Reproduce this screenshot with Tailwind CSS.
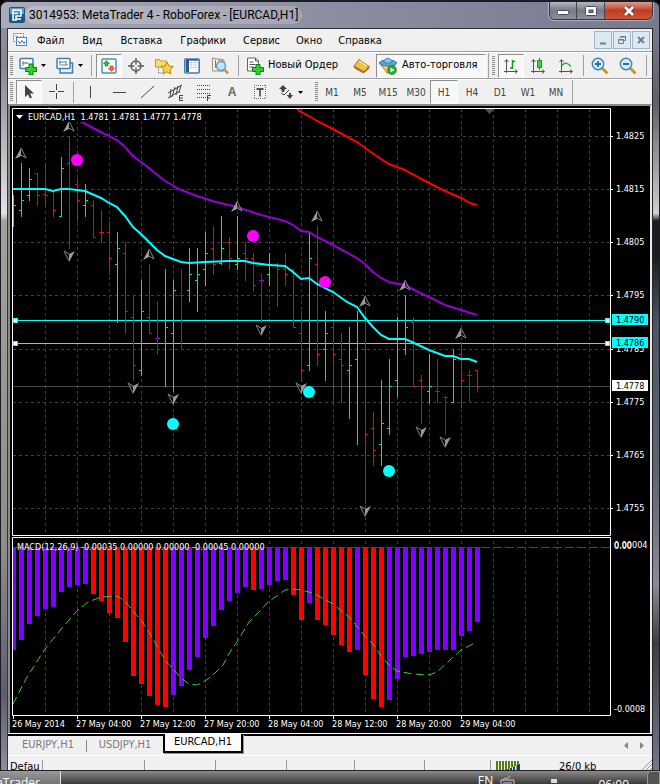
<!DOCTYPE html>
<html lang="ru">
<head>
    <meta charset="UTF-8">
    <meta name="viewport" content="width=device-width, initial-scale=1.0">
    <title>MetaTrader 4 - RoboForex</title>
    <script src="https://cdn.jsdelivr.net/npm/@tailwindcss/browser@4"></script>
</head>
<body class="bg-black font-['DejaVu_Sans_Condensed','DejaVu_Sans',sans-serif] text-[11px] text-black overflow-hidden">
<div class="flex flex-col min-h-screen">

    <!-- window frame -->
    <div class="rounded-t-lg border-t-2 border-x border-[#1c1c26] bg-[#777a8f] overflow-hidden">

        <!-- title bar -->
        <header class="h-[26px] flex items-center ps-2 pe-1.5 bg-gradient-to-r from-[#a9abb9] via-[#8b8da0] to-[#777a8f]">
            <svg class="w-4 h-4 shrink-0" viewBox="0 0 16 16">
                <rect width="16" height="16" rx="2" fill="#1d5784"/>
                <path d="M1 1h14v6H1z" fill="#5f9cc4"/>
                <path d="M4 3h8v6H7v4H4zM4 6.5h5M7 12h5" fill="none" stroke="#fff" stroke-width="1.6"/>
            </svg>
            <h1 class="px-1 text-[12px] font-['Roboto',sans-serif] whitespace-nowrap rounded-full bg-white/20">3014953: MetaTrader 4 - RoboForex - [EURCAD,H1]</h1>
            <div class="ms-auto self-start flex h-[18px] border border-t-0 border-[#33343f] rounded-b-md overflow-hidden shadow-[0_0_1px_1px_#ffffff66]">
                <button class="w-[27px] flex items-center justify-center border-e border-[#44454f] bg-gradient-to-b from-[#b5b6c1] via-[#777988] to-[#8f919e]" aria-label="Свернуть">
                    <svg class="w-3 h-3" viewBox="0 0 12 12"><rect x=".5" y="5.500" width="11" height="4" rx="1" fill="#fff" stroke="#4a4b58"/></svg>
                </button>
                <button class="w-[28px] flex items-center justify-center border-e border-[#44454f] bg-gradient-to-b from-[#b5b6c1] via-[#777988] to-[#8f919e]" aria-label="Развернуть">
                    <svg class="w-3 h-3" viewBox="0 0 12 12"><rect x=".5" y="1.500" width="11" height="9" rx="1" fill="#fff" stroke="#4a4b58"/><rect x="4" y="5" width="4" height="2.500" fill="#777988" stroke="#4a4b58"/></svg>
                </button>
                <button class="w-[47px] flex items-center justify-center bg-gradient-to-b from-[#dc9a8c] via-[#c23a20] to-[#c9553a]" aria-label="Закрыть">
                    <svg class="w-3 h-3" viewBox="0 0 12 12"><path d="M2 2l8 8M10 2l-8 8" stroke="#4a3038" stroke-width="4.500"/><path d="M2 2l8 8M10 2l-8 8" stroke="#fff" stroke-width="2.800"/></svg>
                </button>
            </div>
        </header>

        <div class="flex">
        <div class="w-[7px] shrink-0 border-e border-[#33333b] bg-[linear-gradient(#8d90a3,#8a8890_5%,#e4e2e2_25%,#a3a09e_26%,#8f8c8a_70%,#5c5e70_90%,#8d8f9c)]"></div>
        <div class="flex-1 min-w-0 border-t border-[#303038] bg-[#f0f0f0]">

            <!-- main menu -->
            <nav class="flex items-center h-[23px] ps-1 border-b border-[#a0a0a0]">
                <svg class="w-4 h-4 shrink-0" viewBox="0 0 16 16">
                    <rect x="1.500" y="1.500" width="10" height="8" fill="#fff" stroke="#4d82c8" stroke-dasharray="2 1"/>
                    <path d="M3 4h2l2 2 2-2" fill="none" stroke="#4d82c8"/>
                    <rect x="4.500" y="5.500" width="10" height="8" fill="#fff" stroke="#4d82c8"/>
                    <path d="M6 9l2 2.500 2-3 2 3 1-2" fill="none" stroke="#2f66b4"/>
                </svg>
                <div class="flex pt-0.5">
                    <button class="px-[9px]">Файл</button>
                    <button class="px-[9px]">Вид</button>
                    <button class="px-[9px]">Вставка</button>
                    <button class="px-[9px]">Графики</button>
                    <button class="px-[8px]">Сервис</button>
                    <button class="px-[8px]">Окно</button>
                    <button class="px-[8px]">Справка</button>
                </div>
                <div class="ms-auto flex gap-px pe-0.5">
                    <button class="w-[18px] h-[18px] border border-[#9fb4c8] bg-[#dce9f5]" aria-label="Свернуть график"><svg viewBox="0 0 16 16"><path d="M5 11.500h6" stroke="#6d7f8f" stroke-width="2"/></svg></button>
                    <button class="w-[18px] h-[18px] border border-[#9fb4c8] bg-[#dce9f5]" aria-label="Восстановить график"><svg viewBox="0 0 16 16"><path d="M6.500 6V4.500h5v4H10M6 5h6M4.500 7.500h5v4h-5zM4 8h6" fill="none" stroke="#6d7f8f"/></svg></button>
                    <button class="w-[18px] h-[18px] border border-[#9fb4c8] bg-[#dce9f5]" aria-label="Закрыть график"><svg viewBox="0 0 16 16"><path d="M5 5l6 6M11 5l-6 6" stroke="#6d7f8f" stroke-width="2"/></svg></button>
                </div>
            </nav>

            <!-- standard toolbar -->
            <div class="flex items-center h-[27px] border-t border-b border-t-white border-b-[#a0a0a0] overflow-hidden *:shrink-0">
                <span class="w-2 h-5 flex ps-0.5"><i class="w-[3px] bg-[repeating-linear-gradient(#8a8a8a_0_1px,transparent_1px_2px)]"></i></span>
                <button class="w-[34px] flex items-center gap-1 ps-[3px]" aria-label="Новый график">
                    <svg class="w-[18px] h-[18px]" viewBox="0 0 18 18"><rect x="1" y="1.500" width="13" height="10" rx="1" fill="#fff" stroke="#3f7fb5" stroke-width="1.500"/><path d="M4 4v5M3 6h7M7 5v2" stroke="#6b7f90"/><path d="M10 7h4v3.500h3.500v4H14V18h-4v-3.500H6.500v-4H10z" fill="#2fd12f" stroke="#0b7d14"/></svg>
                    <svg class="w-[5px] h-[3px]" viewBox="0 0 5 3"><path d="M0 0h5L2.500 3z"/></svg>
                </button>
                <button class="w-[36px] flex items-center gap-1 ps-[6px]" aria-label="Профили">
                    <svg class="w-[18px] h-[18px]" viewBox="0 0 18 18"><path d="M4 12v4h12.500V6H14" fill="#e6eff7" stroke="#3f7fb5" stroke-width="1.500"/><rect x="1" y="1.500" width="13" height="10" rx="1" fill="#fff" stroke="#3f7fb5" stroke-width="1.500"/><path d="M4 3.500v5M3 5h7M10 4v4M5 8h7" stroke="#6b7f90"/></svg>
                    <svg class="w-[5px] h-[3px]" viewBox="0 0 5 3"><path d="M0 0h5L2.500 3z"/></svg>
                </button>
                <span class="w-[10px] h-[21px] flex justify-center"><i class="w-px bg-[#a0a0a0]"></i></span>
                <button class="w-[26px] h-6 flex items-center justify-center border border-t-[#909090] border-l-[#909090] border-white bg-[#f8f8f8]" aria-label="Обзор рынка">
                    <svg class="w-4 h-4" viewBox="0 0 16 16"><rect x="1" y="1" width="14" height="14" rx="1" fill="#fff" stroke="#4a90c4" stroke-width="1.500"/><path d="M5.500 2.500l3 3H7v2.500H4V5.500H2.500z" fill="#2cbf2c" stroke="#14801a" stroke-width=".6"/><path d="M10.500 13.500l3-3H12V8H9v2.500H7.500z" fill="#f4683a" stroke="#b8401a" stroke-width=".6"/></svg>
                </button>
                <button class="w-[28px] flex justify-center" aria-label="Перекрестие"><svg class="w-4 h-4" viewBox="0 0 16 16"><circle cx="8" cy="8" r="5" fill="none" stroke="#5f5f5f" stroke-width="1.500"/><path d="M8 0v6.500M8 9.500V16M0 8h6.500M9.500 8H16" stroke="#5f5f5f" stroke-width="1.500"/></svg></button>
                <button class="w-[28px] flex justify-center" aria-label="Навигатор"><svg class="w-5 h-[18px]" viewBox="0 0 20 18"><path d="M1.500 2.500h4l1 1.500h6v6h-11z" fill="#f5dc6a" stroke="#c49a2c"/><path d="M4.500 11v5h4" fill="none" stroke="#666" stroke-dasharray="1 1"/><path d="M13 5l1.900 4 4.300.6-3.100 3 .8 4.400-3.900-2.100L9.100 17l.8-4.400-3.100-3 4.300-.6z" fill="#ffd24c" stroke="#b98316"/></svg></button>
                <button class="w-[28px] flex justify-center" aria-label="Терминал"><svg class="w-4 h-4" viewBox="0 0 16 16"><rect x=".800" y="1" width="14.400" height="14" rx="1" fill="#fff" stroke="#3f7fb5" stroke-width="1.600"/><path d="M2 2h3v12H2z" fill="#2b5c8c"/><path d="M2 2h12" stroke="#2b5c8c" stroke-width="1.500"/><path d="M6.500 4.500h1M6.500 7h1M6.500 9.500h1" stroke="#e33"/><path d="M8.500 4.500H13M8.500 7H13M8.500 9.500H13" stroke="#b6d0e6"/></svg></button>
                <button class="w-[28px] flex justify-center" aria-label="Тестер стратегий"><svg class="w-[18px] h-[18px]" viewBox="0 0 18 18"><path d="M1.500 1v13H13V3z" fill="#f6f0e0" stroke="#9a8f78"/><path d="M4.500 3v8M8 2v4M11 3v6" stroke="#777"/><circle cx="10" cy="9" r="4.500" fill="#c6e2fa" stroke="#5a97cc" stroke-width="1.400"/><path d="M13.500 12.500L17 16.500" stroke="#c9952b" stroke-width="2.500"/></svg></button>
                <span class="w-[8px] h-[21px] flex justify-center"><i class="w-px bg-[#a0a0a0]"></i></span>
                <button class="w-[104px] flex items-center gap-1 ps-1 whitespace-nowrap">
                    <svg class="w-[18px] h-[18px] shrink-0" viewBox="0 0 18 18"><path d="M1.500 1h8l3 3v10h-11z" fill="#fff" stroke="#666"/><path d="M9.500 1v3h3M3.500 5h4M3.500 7.500h6M3.500 10h4" fill="none" stroke="#555"/><path d="M10 7.500h4v3h3.500v4H14V18h-4v-3.500H6.500v-4H10z" fill="#2fd12f" stroke="#0b7d14"/></svg>
                    Новый Ордер
                </button>
                <button class="w-[30px] flex justify-center" aria-label="MetaEditor"><svg class="w-[17px] h-4" viewBox="0 0 17 16"><path d="M6 1.500L16 8.500l-5 5.500L1 8z" fill="#f0c24a" stroke="#a4741a"/><path d="M1 8c0 2 1 2.500 2 3l7.500 4L16 10.500V8.500l-5 5.500z" fill="#c58f26" stroke="#8a5f12" stroke-width=".700"/><path d="M6.500 3l7 5" stroke="#fbe9a8" stroke-width="1.500"/></svg></button>
                <button class="w-[110px] h-6 flex items-center gap-[5px] ps-0.5 whitespace-nowrap border border-t-[#909090] border-l-[#909090] border-white bg-[#f8f8f8]">
                    <svg class="w-[18px] h-[18px] shrink-0" viewBox="0 0 18 18"><path d="M2 8l6 8 4 0 4-8z" fill="#f2cd55" stroke="#b58b20"/><ellipse cx="9" cy="6" rx="8.500" ry="3" fill="#5aa4d8" stroke="#2f77ad"/><path d="M5 5c0-5 7-5 8 0-2 1.500-6 1.500-8 0z" fill="#86c2ea" stroke="#2f77ad" stroke-width=".800"/><circle cx="13" cy="13" r="4.500" fill="#22b02c" stroke="#0f7a18" stroke-width=".600"/><path d="M11.500 10.500v5l4-2.500z" fill="#fff"/></svg>
                    Авто-торговля
                </button>
                <span class="w-[4px] h-[25px] flex justify-center"><i class="w-px bg-[#a0a0a0]"></i></span>
                <span class="w-2 h-5 flex ps-0.5"><i class="w-[3px] bg-[repeating-linear-gradient(#8a8a8a_0_1px,transparent_1px_2px)]"></i></span>
                <button class="w-[26px] h-6 flex items-center justify-center border border-t-[#909090] border-l-[#909090] border-white bg-[#f8f8f8]" aria-label="Бары"><svg class="w-4 h-4" viewBox="0 0 16 16"><path d="M3.500 2v13M1.500 4l2-2.500 2 2.500M1 13.500h13M12 11.500l2.500 2-2.500 2" fill="none" stroke="#555"/><path d="M9.500 2v9M7 10h2.500M9.500 3.500H12" stroke="#119a1c" stroke-width="1.500"/></svg></button>
                <button class="w-[28px] flex justify-center" aria-label="Свечи"><svg class="w-4 h-4" viewBox="0 0 16 16"><path d="M3.500 2v13M1.500 4l2-2.500 2 2.500M1 13.500h13M12 11.500l2.500 2-2.500 2" fill="none" stroke="#555"/><path d="M9.500 0v12" stroke="#119a1c"/><rect x="7.500" y="2.500" width="4" height="7" fill="#3ed348" stroke="#119a1c"/></svg></button>
                <button class="w-[28px] flex justify-center" aria-label="Линия"><svg class="w-4 h-4" viewBox="0 0 16 16"><path d="M3.500 2v13M1.500 4l2-2.500 2 2.500M1 13.500h13M12 11.500l2.500 2-2.500 2" fill="none" stroke="#555"/><path d="M3 9c3-5 6-5 10-.500" fill="none" stroke="#2aa836" stroke-width="1.300"/></svg></button>
                <span class="w-[6px] h-[21px] flex justify-center"><i class="w-px bg-[#a0a0a0]"></i></span>
                <button class="w-[28px] flex justify-center" aria-label="Увеличить"><svg class="w-[18px] h-[18px]" viewBox="0 0 18 18"><path d="M11 11l5.500 5.500" stroke="#c9952b" stroke-width="3"/><circle cx="7" cy="7" r="5.700" fill="#d5eafa" stroke="#3f86bf" stroke-width="1.500"/><path d="M4 7h6M7 4v6" stroke="#2c6fae" stroke-width="1.800"/></svg></button>
                <button class="w-[28px] flex justify-center" aria-label="Уменьшить"><svg class="w-[18px] h-[18px]" viewBox="0 0 18 18"><path d="M11 11l5.500 5.500" stroke="#c9952b" stroke-width="3"/><circle cx="7" cy="7" r="5.700" fill="#d5eafa" stroke="#3f86bf" stroke-width="1.500"/><path d="M4 7h6" stroke="#2c6fae" stroke-width="1.800"/></svg></button>
                <span class="w-[8px] h-[21px] flex justify-center"><i class="w-px bg-[#a0a0a0]"></i></span>
            </div>

            <!-- line studies and timeframes -->
            <div class="flex items-center h-[25px] border-t border-t-white text-[10px] text-[#444] overflow-hidden *:shrink-0">
                <span class="w-2 h-5 flex ps-0.5"><i class="w-[3px] bg-[repeating-linear-gradient(#8a8a8a_0_1px,transparent_1px_2px)]"></i></span>
                <button class="w-[26px] h-6 flex items-center justify-center border border-t-[#909090] border-l-[#909090] border-white bg-[#f8f8f8]" aria-label="Курсор"><svg class="w-4 h-4" viewBox="0 0 16 16"><path d="M4 1v12l3-2.500 2 4 2-1-2-4h4z" fill="#444"/></svg></button>
                <button class="w-[30px] flex justify-center" aria-label="Перекрестие"><svg class="w-4 h-4" viewBox="0 0 16 16"><path d="M7.500 0v6M7.500 9v6M0 7.500h6M9 7.500h6" stroke="#444"/></svg></button>
                <span class="w-[2px] h-[21px] flex justify-center"><i class="w-px bg-[#a0a0a0]"></i></span>
                <button class="w-[32px] flex justify-center" aria-label="Вертикальная линия"><svg class="w-4 h-4" viewBox="0 0 16 16"><path d="M8.500 2v12" stroke="#444"/></svg></button>
                <button class="w-[28px] flex justify-center" aria-label="Горизонтальная линия"><svg class="w-4 h-4" viewBox="0 0 16 16"><path d="M1 8.500h13" stroke="#444"/></svg></button>
                <button class="w-[28px] flex justify-center" aria-label="Трендовая линия"><svg class="w-4 h-4" viewBox="0 0 16 16"><path d="M1 14L14 2" stroke="#444"/></svg></button>
                <button class="w-[28px] flex justify-center" aria-label="Канал"><svg class="w-4 h-[17px]" viewBox="0 0 16 17"><path d="M0 9l14-8M0 14l12-7M3 5l-1 9M7 3L4 13M10 2L8 11M13 1l-2 8" fill="none" stroke="#444"/><path d="M15 11.500h-3.500v5H15M11.500 14H15" fill="none" stroke="#444"/></svg></button>
                <button class="w-[28px] flex justify-center" aria-label="Фибоначчи"><svg class="w-4 h-[17px]" viewBox="0 0 16 17"><path d="M1 1.500h13M1 5.500h13M1 9.500h13M1 13.500h9" stroke="#444" stroke-dasharray="1 1"/><path d="M15 11.500h-3.500V17M11.500 14H14" fill="none" stroke="#444"/></svg></button>
                <button class="w-[28px] text-[12px] font-['Liberation_Sans',sans-serif] font-bold text-[#666]">A</button>
                <button class="w-[28px] flex justify-center" aria-label="Метка"><svg class="w-4 h-4" viewBox="0 0 16 16"><path d="M2 1.500h12M2 14.500h12M2.500 1v14M13.500 1v14" stroke="#777" stroke-dasharray="1 1"/><path d="M4.500 5h7M8 5v7.500" stroke="#555" stroke-width="1.800"/></svg></button>
                <button class="w-[36px] flex items-center gap-1 ps-1" aria-label="Стрелки"><svg class="w-4 h-4" viewBox="0 0 16 16"><path d="M5 1l4 4H7L6 8H4L3 5H1zM12 15l-3.500-4H11V9h2v2h2z" fill="#444"/><path d="M3 9l3 2 5-5" fill="none" stroke="#444"/></svg><svg class="w-[5px] h-[3px]" viewBox="0 0 5 3"><path d="M0 0h5L2.500 3z"/></svg></button>
                <span class="w-[8px] h-5 flex ps-[5px]"><i class="w-[3px] bg-[repeating-linear-gradient(#8a8a8a_0_1px,transparent_1px_2px)]"></i></span>
                <button class="w-[28px]">M1</button>
                <button class="w-[28px]">M5</button>
                <button class="w-[28px]">M15</button>
                <button class="w-[28px]">M30</button>
                <button class="w-[28px] h-6 border border-t-[#909090] border-l-[#909090] border-white bg-[#f8f8f8]">H1</button>
                <button class="w-[28px]">H4</button>
                <button class="w-[28px]">D1</button>
                <button class="w-[28px]">W1</button>
                <button class="w-[28px]">MN</button>
                <span class="w-[4px] h-[25px] flex justify-center"><i class="w-px bg-[#a0a0a0]"></i></span>
            </div>

            <!-- chart window -->
            <main class="border-x-2 border-t-2 border-[#8a8a8a] border-r-[#e8e8e8] bg-black">
                <svg id="chart" class="block w-full text-[9px]" viewBox="10 106 640 627" fill="none"></svg>
            </main>

            <!-- chart tabs -->
            <div class="flex h-[22px] border-t border-white text-[#7a7a7a]">
                <div class="flex w-full border-t-2 border-black ps-0.5">
                    <button class="w-[76px] h-[18px]">EURJPY,H1</button>
                    <span class="w-px h-3 mt-1 bg-[#888]"></span>
                    <button class="w-[76px] h-[18px]">USDJPY,H1</button>
                    <button class="w-[80px] h-[19px] -mt-0.5 bg-white text-black border-2 border-t-0 border-black shadow-[1px_1px_0_#999]">EURCAD,H1</button>
                    <div class="ms-auto flex items-center gap-3 pe-2">
                        <svg class="w-1 h-[7px]" viewBox="0 0 4 7"><path d="M4 0v7L0 3.500z" fill="#888"/></svg>
                        <svg class="w-1 h-[7px]" viewBox="0 0 4 7"><path d="M0 0v7l4-3.500z" fill="#888"/></svg>
                    </div>
                </div>
            </div>

            <!-- status bar -->
            <footer class="flex h-[15px] border-t border-white pt-1 overflow-hidden leading-[14px] *:shrink-0">
                <span class="w-[35px] ps-0.5 border-e border-[#999]">Defau</span>
                <span class="w-[102px] border-e border-[#999]"></span>
                <span class="w-[71px] border-e border-[#999]"></span>
                <span class="w-[71px] border-e border-[#999]"></span>
                <span class="w-[68px] border-e border-[#999]"></span>
                <span class="w-[70px] border-e border-[#999]"></span>
                <span class="w-[66px] border-e border-[#999]"></span>
                <svg class="w-6 h-[10px] ms-[5px] mt-px" viewBox="0 0 24 10"><path d="M0 5h24" stroke="#5a7a10" stroke-width="10" stroke-dasharray="2 1"/><path d="M8 10L24 3v7z" fill="#fff"/><path d="M9 10v-1M12 10V8M15 10V7M18 10V5.500M21.500 10V4M23.500 10V3" stroke="#0e4268" stroke-width="2"/></svg>
                <span class="ms-[39px]">26/0 kb</span>
                <svg class="w-[10px] h-[10px] ms-auto" viewBox="0 0 10 10"><path d="M0 10L10 0M4 10l6-6M8 10l2-2" stroke="#999"/></svg>
            </footer>
        </div>
        <div class="w-[7px] shrink-0 border-s border-[#25252c] bg-[linear-gradient(#777a8f,#606068_10%,#cfcfcf_25%,#1b1e20_26%,#1b1e20_31%,#4a5866_40%,#5d6470_60%,#8a8a98_75%,#3c3c44_83%,#74788a)]"></div>
        </div>
    </div>

    <!-- taskbar -->
    <div class="flex h-[14px] border-t border-[#222] bg-gradient-to-b from-[#8a8a8a] to-[#3a3a3a] text-white overflow-hidden font-['Open_Sans',sans-serif]">
        <button class="w-[61px] h-6 pe-5 flex justify-end items-center border-e border-[#ddd] bg-gradient-to-b from-[#999] to-[#555] text-[12px] leading-[24px]">MetaTrader</button>
        <div class="ms-auto flex items-start gap-[7px] text-[12px] leading-[20px]">
            <span>EN</span>
            <svg class="w-[15px] h-3 mt-1" viewBox="0 0 15 12"><path d="M1 5h13v7H1zM3 5c2-4 4 1 7-4M3 8h9M3 10h9" fill="none" stroke="#ccc"/></svg>
            <svg class="w-2 h-3 ms-7 mt-[7px]" viewBox="0 0 8 12"><path d="M1 1h6v4H1zM0 6h8v6H0z" fill="#ddd"/></svg>
            <span class="ms-[33px] pt-1">06:00</span>
            <span class="w-[13px] h-4 ms-[11px] rounded-tl border border-[#999] bg-[#555]"></span>
        </div>
    </div>
</div>

<script>
    // x step is 8px per H1 bar; [high, low, open, close, colour]
    const G = '#00ff00', R = '#ff0000', V = '#9400d3'
    const bars = [
        [195,227,null,205,G],[163,217,210,200,G],[168,201,195,179,G],[173,206,173,195,R],[163,206,194,195,R],
        [190,217,190,210,R],[157,217,216,168,G],[136,249,163,189,R],[179,222,184,200,R],[184,217,205,200,G],
        [200,238,205,237,R],[210,243,232,232,R],[221,275,232,258,R],[232,323,264,248,G],[242,334,253,311,R],
        [295,381,317,365,R],[280,376,370,311,G],[264,334,317,333,R],[301,355,338,338,V],[269,387,343,327,G],
        [280,392,333,290,G],[269,350,295,295,V],[248,302,290,274,G],[248,312,280,274,G],[232,286,269,253,G],
        [226,275,248,264,R],[216,265,263,248,G],[237,270,242,258,R],[216,270,264,258,G],[242,281,253,258,R],
        [253,291,258,285,R],[274,323,280,280,V],[253,286,274,264,G],[263,307,264,269,R],[253,286,269,274,R],
        [269,327,269,327,R],[311,381,333,370,R],[232,371,365,258,G],[226,366,264,354,R],[311,381,349,333,G],
        [322,403,327,354,R],[333,403,359,365,R],[327,419,370,365,G],[311,445,359,343,G],[311,504,349,434,R],
        [412,466,428,450,R],[380,466,444,423,G],[359,435,428,386,G],[317,397,380,343,G],[295,355,349,327,G],
        [317,387,322,386,R],[375,424,380,386,R],[354,403,391,386,G],[359,403,391,391,V],[396,435,397,397,V],
        [349,403,402,359,G],[342,408,354,380,R],[370,403,375,375,V],[370,392,370,386,R]
    ]
    const macd = [650,640,624,616,609,607,592,587,585,584,594,601,613,618,642,676,684,696,705,707,695,686,670,657,638,626,610,601,593,587,590,589,585,581,580,595,620,603,620,625,635,645,652,650,675,699,707,700,679,657,656,654,652,650,650,650,636,631,622]
    const macdDown = [10,11,12,13,14,15,16,17,18,19,30,35,36,38,39,40,41,42,44,45,46]

    const rect = (x, y, w, h, c) => `<rect x="${x}" y="${y}" width="${w}" height="${h}" fill="${c}"/>`
    const hline = (y, c, extra = '') => `<path d="M13 ${y + .5}H610" stroke="${c}" ${extra}/>`
    const poly = (pts, c, extra) => `<polyline points="${pts}" stroke="${c}" ${extra}/>`
    const text = (x, y, s, c = '#fff') => `<text x="${x}" y="${y}" fill="${c}">${s}</text>`

    let out = ''

    // grid
    const levels = [[136,'1.4825'],[189,'1.4815'],[242,'1.4805'],[295,'1.4795'],[349,'1.4785'],[402,'1.4775'],[455,'1.4765'],[508,'1.4755']]
    levels.forEach(([y]) => out += hline(y, '#3c4248', 'stroke-dasharray="3 3"'))
    for (let x = 45; x < 610; x += 32) {
        out += `<path d="M${x + .5} 109V535M${x + .5} 541V715" stroke="#3c4248" stroke-dasharray="3 3"/>`
    }
    out += hline(386, '#3c4854') + hline(547, '#483d8b', 'stroke-dasharray="9 3"')

    // price levels
    out += hline(320, '#00ffff') + hline(343, '#00ffff')

    bars.forEach(([hi, lo, o, c, col], i) => {
        const x = 13 + i * 8
        out += rect(x, hi, 1, lo - hi, col) + rect(x, c, 3, 1, col)
        if (o !== null) out += rect(x - 2, o, 2, 1, col)
    })

    // moving averages
    out += poly('48,108 57,110 82,122 93,128 109,136 117,140 125,147 133,156 149,168 165,181 181,190 197,196 216,202 237,207 261,215 285,221 293,225 301,231 309,232 317,237 333,245 357,258 365,264 373,272 381,278 389,282 405,285 420,293 429,297 445,305 461,310 477,315', '#9400d3', 'stroke-width="2"')
    out += poly('297,109 301,112 309,116 317,121 333,129 357,142 365,148 381,159 389,164 405,170 410,173 429,183 445,191 461,198 470,203 477,205', '#ff0000', 'stroke-width="2"')
    out += poly('13,189 45,189 53,191 61,189 69,189 85,191 101,198 109,203 117,207 125,216 133,227 141,234 157,250 165,256 181,262 189,263 205,262 229,261 245,261 253,263 269,265 285,266 293,272 301,279 309,278 317,284 333,292 347,302 357,307 365,318 373,327 381,335 389,339 405,339 412,342 429,350 445,356 453,356 461,359 469,359 477,362', '#00ffff', 'stroke-width="2"')

    // fractals
    ;[[21,153],[69,126],[149,254],[237,206],[317,216],[365,301],[405,285],[461,333]].forEach(([x, y]) => {
        out += `<path d="M${x} ${y - 5}l-6 11 6-3z" fill="#999"/><path d="M${x} ${y - 5}l5 10-5-3" stroke="#888"/>`
    })
    ;[[69,256],[133,388],[173,399],[261,330],[301,388],[365,511],[421,432],[445,442]].forEach(([x, y]) => {
        out += `<path d="M${x} ${y + 6}l6-11-6 3z" fill="#999"/><path d="M${x} ${y + 5}l-5-10 5 3" stroke="#888"/>`
    })
    ;[[77,160],[253,236],[325,282]].forEach(([x, y]) => out += `<circle cx="${x}" cy="${y}" r="6" fill="#ff00ff"/>`)
    ;[[173,424],[309,392],[389,471]].forEach(([x, y]) => out += `<circle cx="${x}" cy="${y}" r="6" fill="#00ffff"/>`)

    // macd
    macd.forEach((y, i) => {
        out += rect(i ? 11 + i * 8 : 13, 547, i ? 5 : 3, y - 547, macdDown.includes(i) ? '#ff0000' : '#8000ff')
    })
    out += poly('13,704 27,677 45,649 62,628 77,611 88,602 101,597 117,596 125,601 133,611 141,620 149,632 157,646 165,660 173,669 181,678 189,684 197,685 205,681 213,675 223,665 230,652 237,642 249,622 257,614 269,601 277,596 285,590 293,589 301,590 309,592 317,595 333,604 349,617 365,636 373,644 381,656 389,665 397,671 413,674 429,675 437,672 449,661 461,650 477,642', '#32cd32', 'stroke-dasharray="8 4"')

    // frames, handles, scroll mark
    out += '<path d="M12.5 108.500H610.500V535.500H12.500zM12.500 537.500H610.500V715.500H12.500z" stroke="#fff"/>'
    out += '<path d="M485 109h9l-4.500 5z" fill="#4a5560"/>'
    ;[320, 343].forEach(y => [13, 605].forEach(x => out += `<rect x="${x + .5}" y="${y - 1.5}" width="4" height="4" fill="#fff" stroke="#00ffff"/>`))

    // labels
    out += rect(14, 110, 197, 12, '#000') + '<path d="M16 115h7l-3.500 4z" fill="#fff"/>'
    out += text(28, 120, 'EURCAD,H1&#160; 1.4781 1.4781 1.4777 1.4778')
    out += text(17, 550, 'MACD(12,26,9) -0.00035 0.00000 0.00000 -0.00045 0.00000')
    levels.forEach(([y, s]) => out += rect(611, y, 2, 1, '#fff') + text(616, y + 3, s))
    out += rect(612, 314, 36, 11, '#00ffff') + text(616, 323, '1.4790', '#000')
    out += rect(612, 337, 36, 11, '#00ffff') + text(616, 346, '1.4786', '#000')
    out += rect(612, 380, 36, 11, '#fff') + text(616, 389, '1.4778', '#000')
    out += text(614, 548, '0.00004') + text(614, 549, '0.00') + text(614, 712, '-0.0008')
    ;['26 May 2014','27 May 04:00','27 May 12:00','27 May 20:00','28 May 04:00','28 May 12:00','28 May 20:00','29 May 04:00'].forEach((s, i) => {
        out += rect(13 + i * 64, 716, 1, 3, '#fff') + text(12 + i * 64, 727, s)
    })

    document.getElementById('chart').innerHTML = out
</script>
</body>
</html>
